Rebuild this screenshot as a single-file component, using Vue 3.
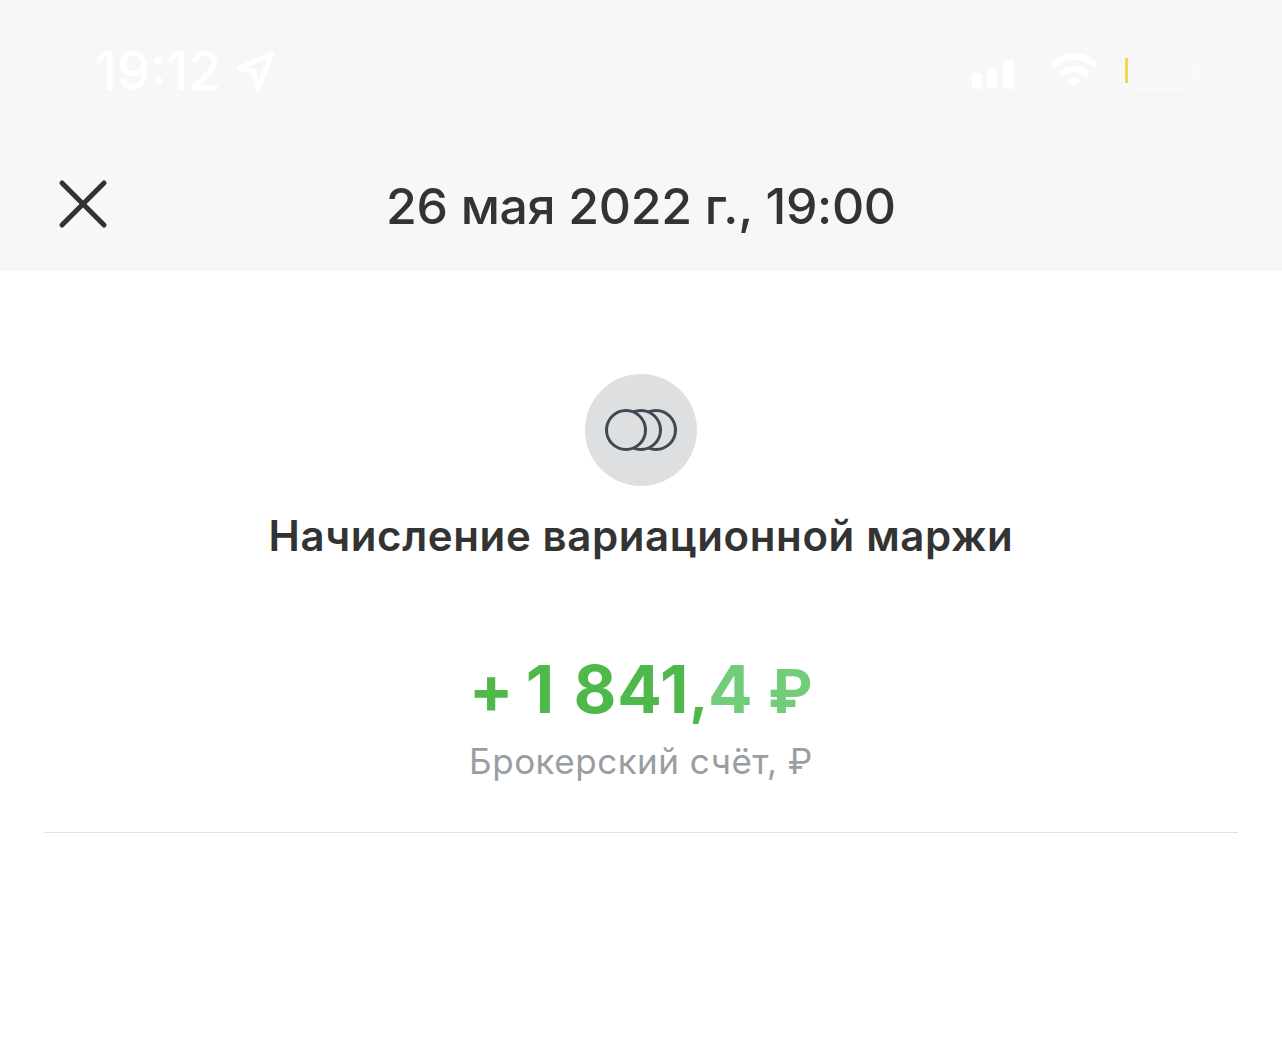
<template>
  <div class="screen">
    <header class="top">
      <div class="status">
        <div class="clock">
          <span>19:12</span>
          <svg width="40" height="40" viewBox="0 0 40 40" fill="none">
            <path d="M3 17 L36 3 L22 37 L18 20 Z" stroke="#fff" stroke-width="5" stroke-linejoin="round" />
          </svg>
        </div>
        <div class="indicators">
          <svg class="bars" width="42" height="29" viewBox="0 0 42 29" fill="#fff">
            <rect x="0" y="13" width="10" height="16" rx="2" />
            <rect x="15" y="7" width="10" height="22" rx="2" />
            <rect x="31" y="0" width="11" height="29" rx="2" />
          </svg>
          <svg class="wifi" width="48" height="34" viewBox="0 0 48 34" fill="none" stroke="#fff" stroke-width="6.5">
            <path d="M2 13 C15 0 33 0 46 13" />
            <path d="M10 22 C19 14 29 14 38 22" />
            <path d="M16 28 L24 34 L32 28 C27 24 21 24 16 28 Z" fill="#fff" stroke="none" />
          </svg>
          <div class="battery">
            <span class="level"></span>
            <span class="nub"></span>
          </div>
        </div>
      </div>
      <div class="nav">
        <svg class="close" width="50" height="50" viewBox="0 0 50 50" fill="none" stroke="#333" stroke-width="5" stroke-linecap="round">
          <path d="M4 4 L46 46" />
          <path d="M46 4 L4 46" />
        </svg>
        <div class="date">26 мая 2022 г., 19:00</div>
      </div>
    </header>

    <main class="body">
      <div class="badge">
        <svg width="74" height="44" viewBox="0 0 74 44" fill="#dddfe1" stroke="#414853" stroke-width="3">
          <circle cx="52" cy="22" r="19.5" />
          <circle cx="37" cy="22" r="19.5" />
          <circle cx="22" cy="22" r="19.5" />
        </svg>
      </div>
      <h1 class="title">Начисление вариационной маржи</h1>
      <div class="amount"><span class="plus">+</span> <span class="lead">1</span> 841<span class="comma">,</span><span class="fade"><span class="last">4</span> <span class="rub">₽</span></span></div>
      <div class="account">Брокерский счёт, ₽</div>
      <div class="line"></div>
    </main>
  </div>
</template>

<script setup>
</script>

<style>
html, body {
  background: #fff;
}
</style>

<style scoped>
.screen {
  width: 1282px;
  height: 1038px;
  overflow: hidden;
  background: #fff;
  font-family: Inter, "Liberation Sans", sans-serif;
}
.top {
  height: 271px;
  box-sizing: border-box;
  background: #f7f7f7;
  padding-top: 42px;
}
.status {
  height: 60px;
  padding: 0 82px 0 95px;
  display: flex;
  justify-content: space-between;
  align-items: center;
}
.clock {
  display: flex;
  align-items: center;
  gap: 15px;
  margin-bottom: 2px;
  color: #fff;
  font-size: 53px;
  font-weight: 500;
}
.indicators {
  display: flex;
  align-items: center;
}
.bars {
  margin-top: 5px;
}
.wifi {
  margin: 0 25px 4px 36px;
}
.battery {
  position: relative;
  width: 72px;
  height: 39px;
  margin-right: 5px;
  margin-bottom: 3px;
  box-sizing: border-box;
  border: 2px solid #fafafa;
  border-radius: 10px;
  display: flex;
  align-items: center;
}
.level {
  width: 3px;
  height: 25px;
  background: #f0d848;
}
.nub {
  position: absolute;
  right: -7px;
  top: 11px;
  width: 3px;
  height: 13px;
  border-radius: 0 3px 3px 0;
  background: #fafafa;
}
.nav {
  margin-top: 74px;
  padding-left: 58px;
  display: flex;
  align-items: center;
}
.close {
  flex: none;
  margin-bottom: 4px;
}
.date {
  margin-left: 278px;
  color: #333;
  font-size: 50px;
  font-weight: 450;
  letter-spacing: -0.33px;
  white-space: nowrap;
}
.body {
  display: flex;
  flex-direction: column;
  align-items: center;
  padding-top: 103px;
}
.badge {
  width: 112px;
  height: 112px;
  border-radius: 50%;
  background: #dddfe1;
  display: flex;
  align-items: center;
  justify-content: center;
}
.title {
  margin: 24px 0 0;
  color: #333;
  font-size: 42px;
  font-weight: 600;
  letter-spacing: 0.62px;
  white-space: nowrap;
}
.amount {
  margin-top: 88px;
  color: #4eb84b;
  font-size: 66px;
  font-weight: 700;
  letter-spacing: 0.8px;
  word-spacing: -3px;
  white-space: nowrap;
}
.plus {
  margin-right: -2px;
}
.lead {
  margin-right: 5px;
}
.comma {
  font-size: 56px;
  letter-spacing: 0;
}
.fade {
  color: #72cd78;
}
.last {
  margin-right: 1px;
}
.rub {
  font-size: 60px;
}
.account {
  margin-top: 11px;
  color: #9a9da2;
  font-size: 35px;
  letter-spacing: 0.5px;
  white-space: nowrap;
}
.line {
  width: 1194px;
  height: 1px;
  margin-top: 50px;
  background: #e0e1e3;
}
</style>
